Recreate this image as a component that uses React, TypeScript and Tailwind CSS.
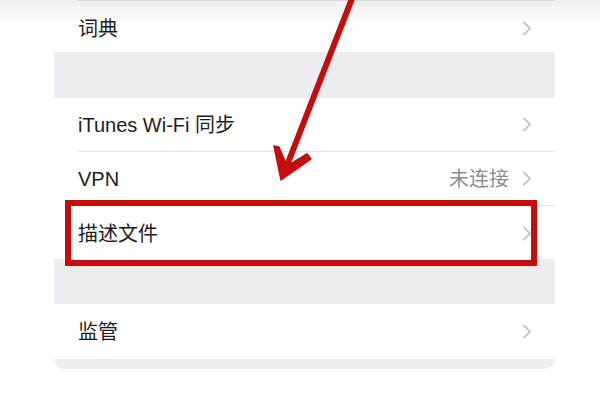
const font = '"Liberation Sans", "Noto Sans CJK SC", sans-serif'

function Chevron() {
  return (
    <svg width="10" height="15" viewBox="0 0 10 15" className="shrink-0">
      <path d="M2 1.5 L8 7.5 L2 13.5" fill="none" stroke="#c4c4c9" strokeWidth="1.8" strokeLinecap="round" strokeLinejoin="round" />
    </svg>
  )
}

function Row({ label, value, divider = true, className = '' }: { label: string; value?: string; divider?: boolean; className?: string }) {
  return (
    <div className={`flex items-stretch bg-white pl-[24px] ${className}`}>
      <div className={`flex flex-1 items-center pr-[23px] ${divider ? 'border-b border-[#e3e3e8]' : ''}`}>
        <span className="flex-1 text-[20px] text-[#1c1c1e]">{label}</span>
        {value && <span className="mr-[13px] text-[20px] text-[#8e8e93]">{value}</span>}
        <Chevron />
      </div>
    </div>
  )
}

export default function App() {
  return (
    <div className="relative h-[400px] w-[600px] overflow-hidden bg-white" style={{ fontFamily: font }}>
      <div className="ml-[54px] w-[501px]">
        <div className="ml-[23px] border-t border-[#e6e6ea]" />
        <Row label="词典" divider={false} className="h-[51px] pt-[4px]" />
        <div className="h-[46px] bg-[#ececf1]" />
        <Row label="iTunes Wi-Fi 同步" className="h-[54px]" />
        <Row label="VPN" value="未连接" className="h-[54px]" />
        <Row label="描述文件" divider={false} className="h-[53px] pt-[2px]" />
        <div className="h-[45px] bg-[#ececf1]" />
        <Row label="监管" divider={false} className="h-[55px]" />
        <div className="h-[10px] rounded-b-[10px] bg-[#ececf1]" />
      </div>

      {/* top fade */}
      <div className="pointer-events-none absolute left-0 top-0 h-[28px] w-full bg-gradient-to-b from-[#00000010] to-transparent" />

      {/* highlight box */}
      <div className="absolute left-[65px] top-[200px] h-[66px] w-[472px] border-[6px] border-[#c50d0d]" />

      {/* arrow */}
      <svg className="pointer-events-none absolute left-0 top-0" width="600" height="400">
        <line x1="353" y1="-4" x2="286" y2="168" stroke="#c50d0d" strokeWidth="6" />
        <polygon points="281,180 274,146 279,147 287,166 307,154 311,159" fill="#c50d0d" stroke="#c50d0d" strokeWidth="1.5" strokeLinejoin="round" />
      </svg>
    </div>
  )
}
